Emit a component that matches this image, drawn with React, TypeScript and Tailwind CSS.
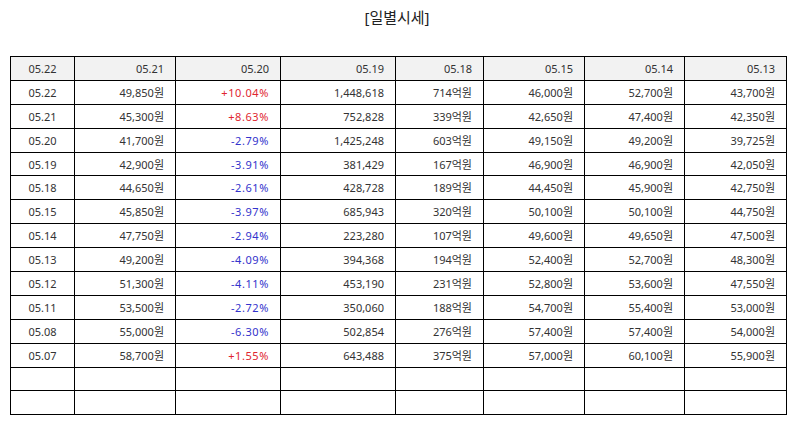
import React from "react";

const header = ["05.22", "05.21", "05.20", "05.19", "05.18", "05.15", "05.14", "05.13"];

// date, close, change, volume, amount, open, high, low
const rows: string[][] = [
  ["05.22", "49,850원", "+10.04%", "1,448,618", "714억원", "46,000원", "52,700원", "43,700원"],
  ["05.21", "45,300원", "+8.63%", "752,828", "339억원", "42,650원", "47,400원", "42,350원"],
  ["05.20", "41,700원", "-2.79%", "1,425,248", "603억원", "49,150원", "49,200원", "39,725원"],
  ["05.19", "42,900원", "-3.91%", "381,429", "167억원", "46,900원", "46,900원", "42,050원"],
  ["05.18", "44,650원", "-2.61%", "428,728", "189억원", "44,450원", "45,900원", "42,750원"],
  ["05.15", "45,850원", "-3.97%", "685,943", "320억원", "50,100원", "50,100원", "44,750원"],
  ["05.14", "47,750원", "-2.94%", "223,280", "107억원", "49,600원", "49,650원", "47,500원"],
  ["05.13", "49,200원", "-4.09%", "394,368", "194억원", "52,400원", "52,700원", "48,300원"],
  ["05.12", "51,300원", "-4.11%", "453,190", "231억원", "52,800원", "53,600원", "47,550원"],
  ["05.11", "53,500원", "-2.72%", "350,060", "188억원", "54,700원", "55,400원", "53,000원"],
  ["05.08", "55,000원", "-6.30%", "502,854", "276억원", "57,400원", "57,400원", "54,000원"],
  ["05.07", "58,700원", "+1.55%", "643,488", "375억원", "57,000원", "60,100원", "55,900원"],
];

const widths = ["w-[64px]", "w-[101px]", "w-[105px]", "w-[115px]", "w-[88px]", "w-[101px]", "w-[100px]", "w-[102px]"];

const cell = "border border-black h-[23.9px] p-0 text-[11px] leading-none";

export default function App() {
  return (
    <div
      className="w-[794px] h-[425px] bg-white px-[10px] text-[#333]"
      style={{ fontFamily: '"Noto Sans", "Noto Sans CJK KR", sans-serif' }}
    >
      <h1 className="pt-[7px] h-[56px] text-center text-[15px] leading-[20px] text-[#222] font-normal">
        [일별시세]
      </h1>
      <table className="w-[776px] border-collapse table-fixed">
        <colgroup>
          {widths.map((w, i) => (
            <col key={i} className={w} />
          ))}
        </colgroup>
        <thead>
          <tr className="bg-[#f2f2f2]">
            {header.map((h, i) => (
              <th
                key={i}
                className={`${cell} font-normal ${i === 0 ? "text-center" : "text-right pr-[11px]"}`}
              >
                {h}
              </th>
            ))}
          </tr>
        </thead>
        <tbody>
          {rows.map((r, ri) => (
            <tr key={ri}>
              {r.map((v, i) => {
                let color = "";
                if (i === 2) color = v.startsWith("+") ? "text-[#e0262f] tracking-[0.6px]" : "text-[#3333cc] tracking-[0.6px]";
                return (
                  <td
                    key={i}
                    className={`${cell} ${i === 0 ? "text-center" : "text-right pr-[11px]"} ${color}`}
                  >
                    {v}
                  </td>
                );
              })}
            </tr>
          ))}
          {[0, 1].map((k) => (
            <tr key={`e${k}`}>
              {header.map((_, i) => (
                <td key={i} className={cell}></td>
              ))}
            </tr>
          ))}
        </tbody>
      </table>
    </div>
  );
}
